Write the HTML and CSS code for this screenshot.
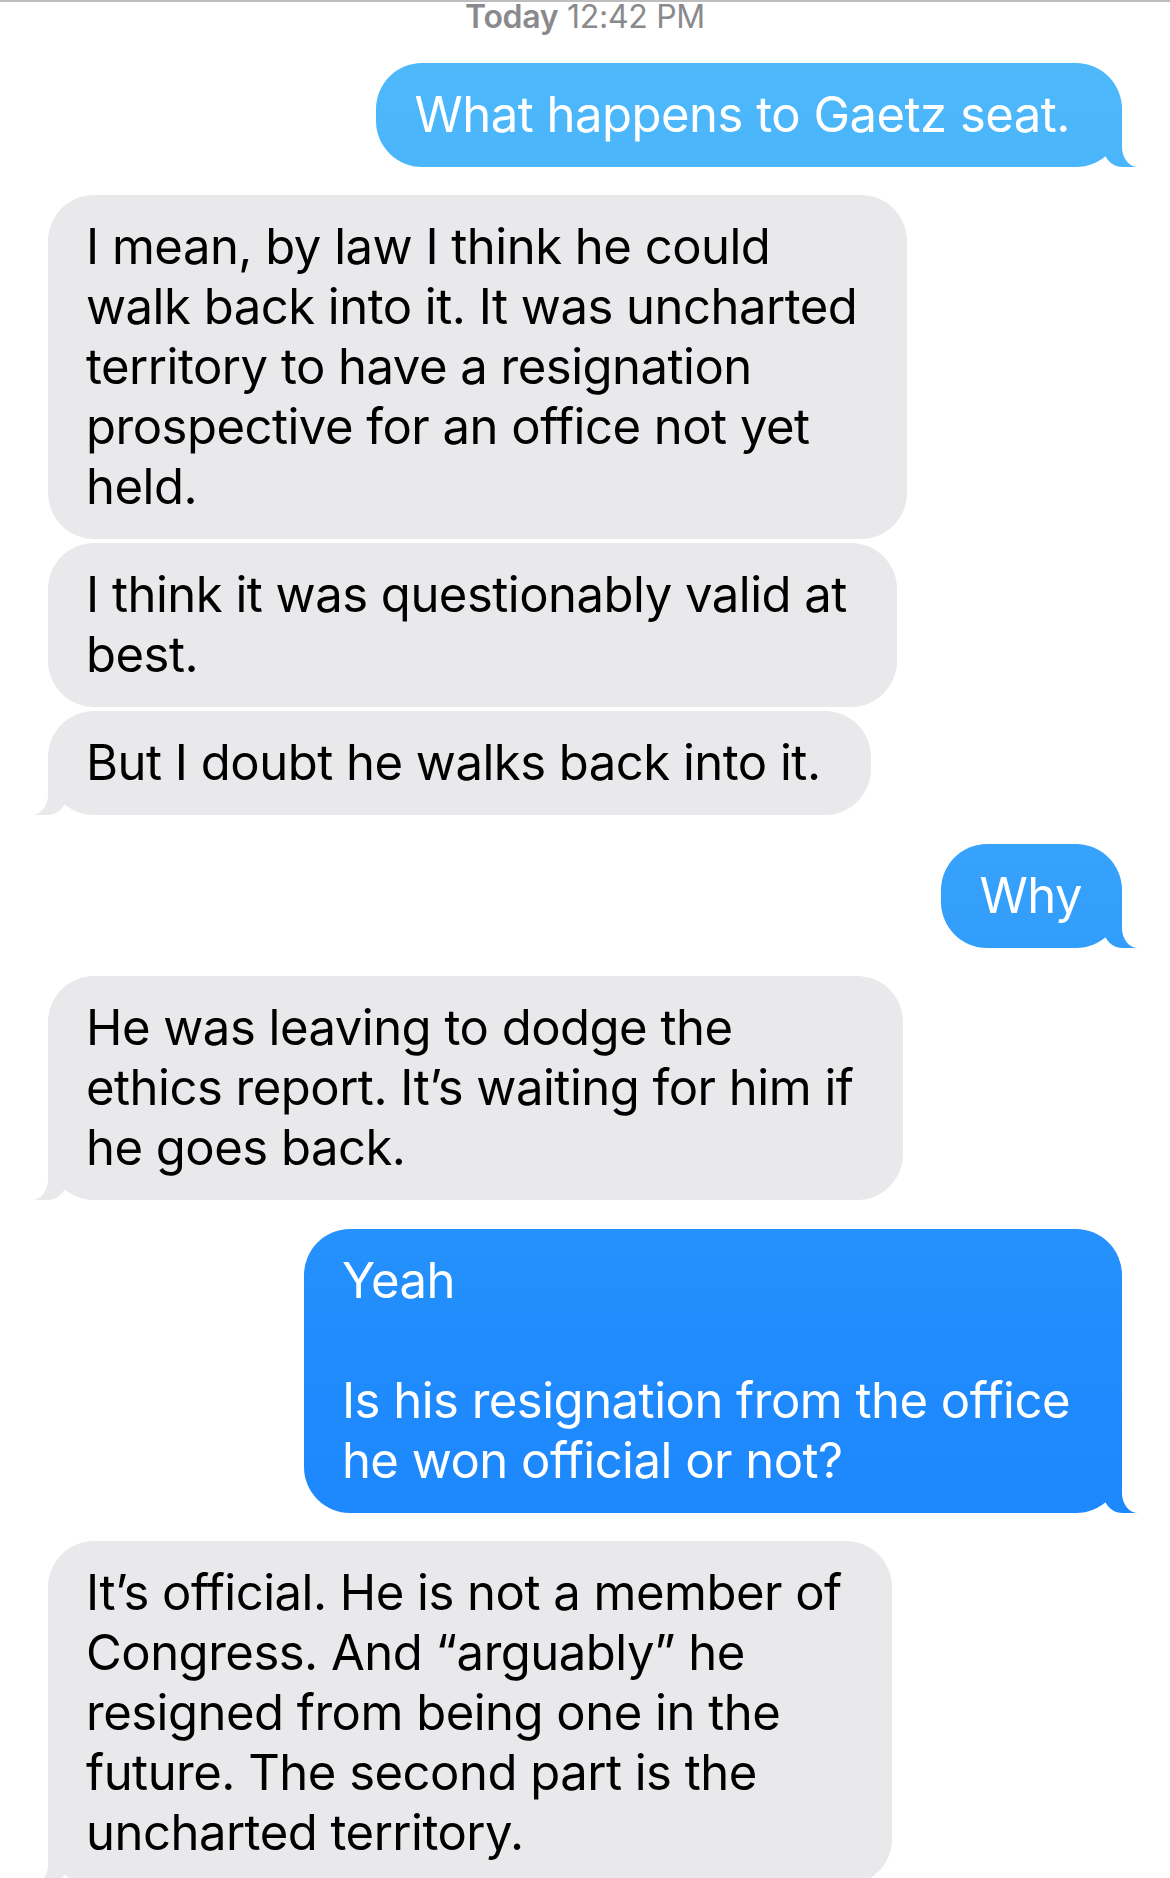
FILE: index.html
```html
<!DOCTYPE html>
<html lang="en">
<head>
<meta charset="utf-8">
<title>Messages</title>
<link rel="stylesheet" href="styles.css">
</head>
<body>
<main class="thread">
  <div class="stamp"><b>Today</b> 12:42 PM</div>

  <div class="group sent">
    <div class="bubble out tail"><span>What happens to Gaetz seat.</span></div>
  </div>

  <div class="group recv">
    <div class="bubble in"><span>I mean, by law I think he could<br>walk back into it. It was uncharted<br>territory to have a resignation<br>prospective for an office not yet<br>held.</span></div>
    <div class="bubble in"><span>I think it was questionably valid at<br>best.</span></div>
    <div class="bubble in tail"><span>But I doubt he walks back into it.</span></div>
  </div>

  <div class="group sent">
    <div class="bubble out tail short"><span>Why</span></div>
  </div>

  <div class="group recv">
    <div class="bubble in tail"><span>He was leaving to dodge the<br>ethics report. It’s waiting for him if<br>he goes back.</span></div>
  </div>

  <div class="group sent">
    <div class="bubble out tail"><span>Yeah<br><br>Is his resignation from the office<br>he won official or not?</span></div>
  </div>

  <div class="group recv">
    <div class="bubble in tail"><span>It’s official. He is not a member of<br>Congress. And “arguably” he<br>resigned from being one in the<br>future. The second part is the<br>uncharted territory.</span></div>
  </div>
</main>
</body>
</html>
```
FILE: styles.css
```css
html, body {
  margin: 0;
  padding: 0;
  background: #ffffff;
}

body {
  font-family: Inter, "Noto Sans", "Liberation Sans", sans-serif;
  overflow: hidden;
  height: 1878px;
}

.thread {
  border-top: 2px solid #bdbdbd;
  display: flex;
  flex-direction: column;
  gap: 28px;
}

.stamp {
  margin-top: -2px;
  text-align: center;
  font-size: 32px;
  line-height: 34px;
  color: #8a8a8e;
  letter-spacing: -0.3px;
}

.stamp b {
  font-weight: 600;
}

.group {
  display: flex;
  flex-direction: column;
  gap: 4px;
}

.group.sent {
  align-items: flex-end;
  padding-right: 48px;
  margin-top: 1px;
}

.group.recv {
  align-items: flex-start;
  padding-left: 48px;
}

.bubble {
  position: relative;
  font-size: 49px;
  line-height: 60px;
  padding: 22px 50px 22px 38px;
  border-radius: 46px;
  white-space: nowrap;
  letter-spacing: -0.5px;
}

.bubble span {
  position: relative;
  z-index: 2;
}

.bubble.in {
  background: #e9e9eb;
  color: #000000;
}

.bubble.out {
  background: linear-gradient(180deg, #4fbafa 0px, #36a2fb 850px, #1e8afd 1400px, #1a84fc 1878px) fixed;
  color: #ffffff;
  padding: 22px 52px 22px 38px;
}

.bubble.out.short {
  padding-right: 40px;
}

/* tails */
.bubble.tail::before,
.bubble.tail::after {
  content: "";
  position: absolute;
  bottom: 0;
  height: 46px;
}

.bubble.in.tail::before {
  left: -17px;
  width: 37px;
  background: inherit;
  border-bottom-right-radius: 20px 24px;
  z-index: 0;
}

.bubble.in.tail::after {
  left: -46px;
  width: 46px;
  background: #ffffff;
  border-bottom-right-radius: 17px 20px;
  z-index: 1;
}

.bubble.out.tail::before {
  right: -16px;
  width: 36px;
  background: inherit;
  border-bottom-left-radius: 20px 24px;
  z-index: 0;
}

.bubble.out.tail::after {
  right: -46px;
  width: 46px;
  background: #ffffff;
  border-bottom-left-radius: 16px 20px;
  z-index: 1;
}
```
